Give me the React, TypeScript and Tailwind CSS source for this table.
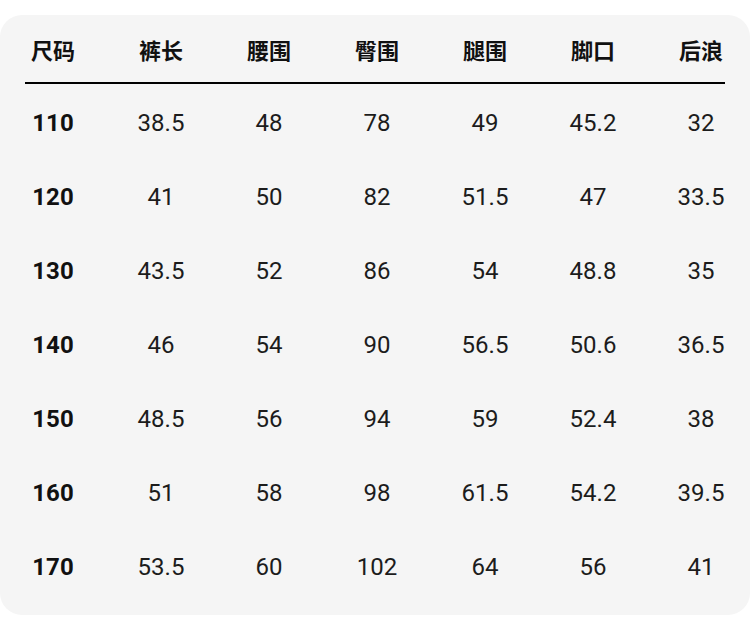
const headers = ['尺码', '裤长', '腰围', '臀围', '腿围', '脚口', '后浪']

const rows = [
  ['110', '38.5', '48', '78', '49', '45.2', '32'],
  ['120', '41', '50', '82', '51.5', '47', '33.5'],
  ['130', '43.5', '52', '86', '54', '48.8', '35'],
  ['140', '46', '54', '90', '56.5', '50.6', '36.5'],
  ['150', '48.5', '56', '94', '59', '52.4', '38'],
  ['160', '51', '58', '98', '61.5', '54.2', '39.5'],
  ['170', '53.5', '60', '102', '64', '56', '41'],
]

export default function App() {
  return (
    <div className="w-[750px] h-[629px] bg-white pt-[15px]">
      <div className="w-[750px] h-[600px] rounded-[22px] bg-[#f5f5f5] overflow-hidden">
        {/* header */}
        <div className="-ml-px grid grid-cols-[repeat(7,108px)] h-[67px] pt-[2px] items-center font-['Noto_Sans_CJK_SC',sans-serif] text-[22px] font-bold text-[#111]">
          {headers.map((h) => (
            <div key={h} className="text-center">
              {h}
            </div>
          ))}
        </div>
        <div className="mx-[25px] h-[2px] bg-black" />

        {/* body */}
        <div className="mt-[2px] font-['Roboto',sans-serif] text-[24px] text-[#1c1c1c]">
          {rows.map((r) => (
            <div key={r[0]} className="-ml-px grid grid-cols-[repeat(7,108px)] h-[74px] items-center">
              {r.map((v, i) => (
                <div key={i} className={i === 0 ? 'text-center font-bold text-[#111]' : 'text-center'}>
                  {v}
                </div>
              ))}
            </div>
          ))}
        </div>
      </div>
    </div>
  )
}
